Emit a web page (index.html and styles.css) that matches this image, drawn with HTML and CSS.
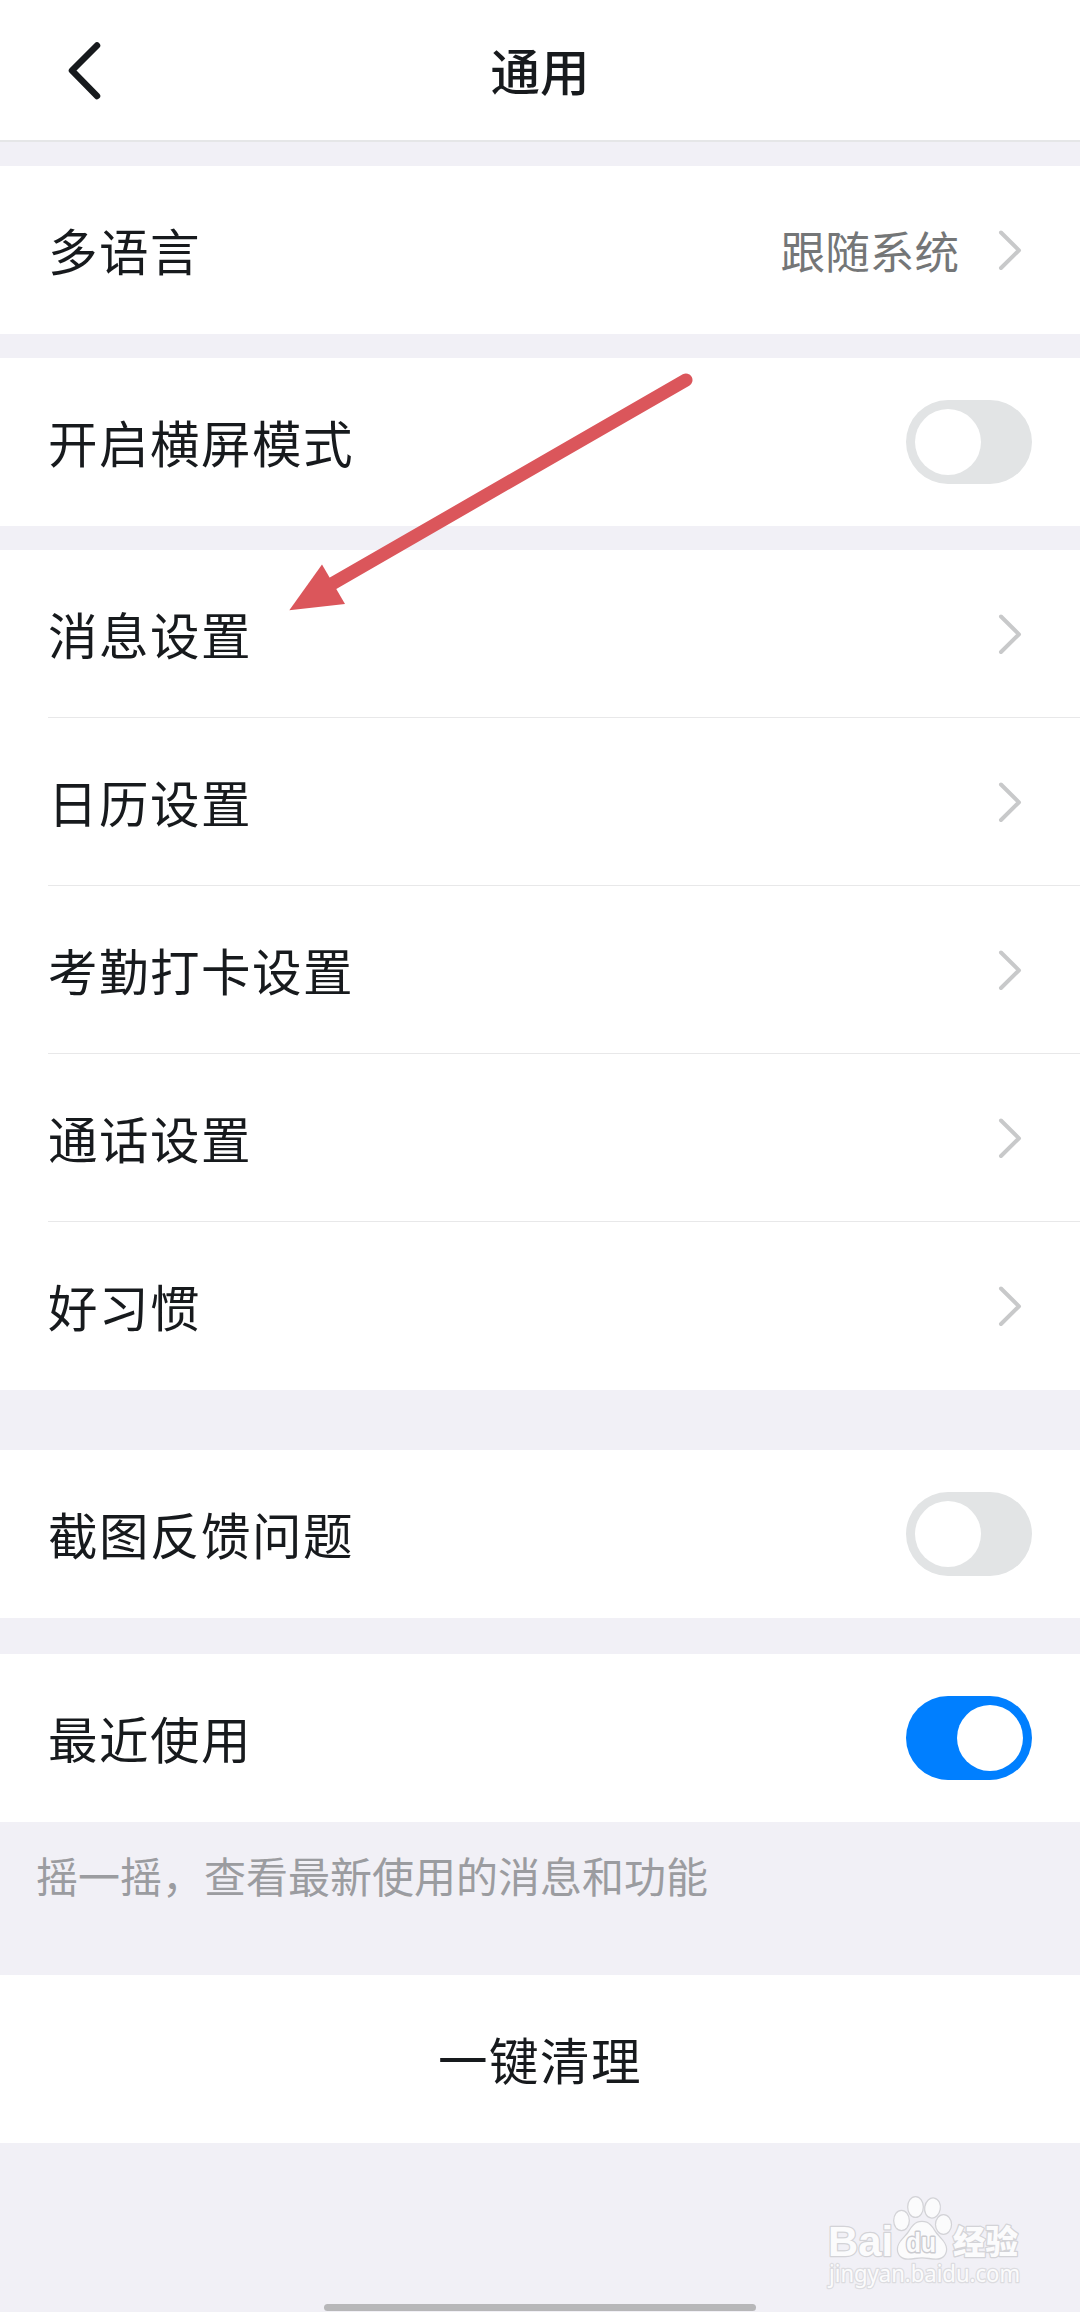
FILE: index.html
```html
<!DOCTYPE html>
<html lang="zh-CN">
<head>
<meta charset="utf-8">
<title>通用</title>
<link rel="stylesheet" href="styles.css">
</head>
<body>
<svg class="defs" width="0" height="0" aria-hidden="true">
  <symbol id="chevron" viewBox="0 0 26 44"><path d="M4 4.500 22 22.300 4 40"/></symbol>
</svg>
<main class="screen">
  <header class="header">
    <svg class="back" viewBox="0 0 44 64"><path d="M33 7.500 8 32.500 33 58"/></svg>
    <h1 class="title">通用</h1>
  </header>

  <section class="group">
    <div class="row"><span class="label">多语言</span><span class="value">跟随系统</span><svg class="chevron"><use href="#chevron"/></svg></div>
  </section>

  <section class="group">
    <div class="row"><span class="label">开启横屏模式</span><span class="toggle"></span></div>
  </section>

  <section class="group">
    <div class="row"><span class="label">消息设置</span><svg class="chevron"><use href="#chevron"/></svg></div>
    <div class="row"><span class="label">日历设置</span><svg class="chevron"><use href="#chevron"/></svg></div>
    <div class="row"><span class="label">考勤打卡设置</span><svg class="chevron"><use href="#chevron"/></svg></div>
    <div class="row"><span class="label">通话设置</span><svg class="chevron"><use href="#chevron"/></svg></div>
    <div class="row"><span class="label">好习惯</span><svg class="chevron"><use href="#chevron"/></svg></div>
  </section>

  <section class="group group-feedback">
    <div class="row"><span class="label">截图反馈问题</span><span class="toggle"></span></div>
  </section>

  <section class="group group-recent">
    <div class="row"><span class="label">最近使用</span><span class="toggle toggle-on"></span></div>
  </section>
  <p class="hint">摇一摇，查看最新使用的消息和功能</p>

  <button class="clean">一键清理</button>

  <footer class="footer">
    <svg class="watermark" viewBox="0 0 204 100">
      <g class="mark">
        <text class="brand" x="4" y="60" textLength="65" lengthAdjust="spacingAndGlyphs">Bai</text>
        <ellipse cx="77.5" cy="24.500" rx="7.2" ry="9.6"/>
        <ellipse cx="91.5" cy="11" rx="7.2" ry="9.8"/>
        <ellipse cx="108.5" cy="12" rx="7.2" ry="9.5" transform="rotate(10 108.5 12)"/>
        <ellipse cx="119.5" cy="28.500" rx="7.4" ry="9.3"/>
        <path d="M98 26c-7 0-10 5-13 10s-11 10-11 17c0 6 4 9.500 10 9.500 5 0 9-1.200 14-1.200s9 1.200 14 1.200c6 0 10-3.500 10-9.500 0-7-8-12-11-17s-6-10-13-10z"/>
        <text class="du" x="82" y="56" textLength="30" lengthAdjust="spacingAndGlyphs">du</text>
        <text class="exp" x="129" y="58" textLength="65" lengthAdjust="spacingAndGlyphs">经验</text>
        <text class="url" x="5" y="86" textLength="191" lengthAdjust="spacingAndGlyphs">jingyan.baidu.com</text>
      </g>
    </svg>
    <div class="home-bar"></div>
  </footer>

  <svg class="arrow" viewBox="0 0 410 245">
    <path class="shaft" d="M401 10 45 215"/>
    <path class="head" d="M4.300 240.300 37 194.500 60 234z"/>
  </svg>
</main>
</body>
</html>
```
FILE: styles.css
```css
* { box-sizing: border-box; }

body {
  margin: 0;
  background: #f1f0f6;
  color: #171a1d;
  font-family: "Noto Sans CJK SC", sans-serif;
}

.defs { display: block; position: absolute; }

.screen {
  position: relative;
  display: flex;
  flex-direction: column;
  width: 1080px;
  height: 2312px;
  overflow: hidden;
}

.header {
  display: grid;
  grid-template-columns: 1fr auto 1fr;
  align-items: center;
  height: 142px;
  padding: 0 64px;
  background: #fff;
  border-bottom: 2px solid #e5e6e7;
}

.back {
  width: 44px;
  height: 64px;
  fill: none;
  stroke: #171a1d;
  stroke-width: 6.500;
  stroke-linecap: round;
  stroke-linejoin: round;
}

.title {
  margin: 0;
  font-size: 49.500px;
  font-weight: 500;
  line-height: 72px;
}

.group { margin-top: 24px; background: #fff; }
.group-feedback { margin-top: 60px; }
.group-recent { margin-top: 36px; }

.row {
  display: flex;
  align-items: center;
  height: 168px;
  margin-left: 48px;
  padding-right: 48px;
  white-space: nowrap;
}

.row + .row { box-shadow: 0 -1px #e8e8e9; }

.label {
  padding-bottom: 1px;
  font-size: 49.500px;
  letter-spacing: 1.500px;
}

.value {
  margin-left: auto;
  padding-bottom: 1px;
  font-size: 44.600px;
  color: #747677;
}

.chevron {
  width: 26px;
  height: 44px;
  margin: 0 9px 0 auto;
  fill: none;
  stroke: #c8c9ca;
  stroke-width: 4;
  stroke-linecap: round;
  stroke-linejoin: round;
}

.value + .chevron { margin-left: 38px; }

.toggle {
  display: flex;
  width: 126px;
  height: 84px;
  margin-left: auto;
  padding: 9px;
  border-radius: 42px;
  background: #e2e4e5;
}

.toggle::before {
  content: "";
  width: 66px;
  height: 66px;
  border-radius: 50%;
  background: #fff;
}

.toggle-on { justify-content: flex-end; background: #007fff; }

.hint {
  height: 153px;
  margin: 0;
  padding: 23px 36px;
  font-size: 42px;
  line-height: 60px;
  color: #9b9ca0;
}

.clean {
  height: 168px;
  padding: 0 0 1px;
  border: 0;
  background: #fff;
  color: inherit;
  font: 49.500px "Noto Sans CJK SC", sans-serif;
  letter-spacing: 1.500px;
}

.footer {
  display: flex;
  flex: 1;
  flex-direction: column;
  align-items: center;
  justify-content: space-between;
  padding: 53px 52px 1px;
}

.watermark {
  align-self: flex-end;
  width: 204px;
  height: 100px;
  overflow: visible;
}

.mark {
  fill: #fbfbfc;
  stroke: #d3d3d7;
  stroke-width: 2.500px;
  stroke-linejoin: round;
  paint-order: stroke;
}

.brand { font: bold 43px "Liberation Sans", sans-serif; }
.du { font: bold 28px "Liberation Sans", sans-serif; stroke: #cbcbd0; stroke-width: 3px; }
.exp { font: 900 33px "Noto Sans CJK SC", sans-serif; }
.url { font: 23px "Noto Sans", sans-serif; stroke: #dcdce0; }

.home-bar {
  width: 432px;
  height: 7px;
  border-radius: 4px;
  background: #b7b7b9;
}

.arrow {
  position: absolute;
  left: 285px;
  top: 370px;
  width: 410px;
  height: 245px;
}

.shaft { stroke: #db565b; stroke-width: 13; stroke-linecap: round; }
.head { fill: #db565b; }
```
